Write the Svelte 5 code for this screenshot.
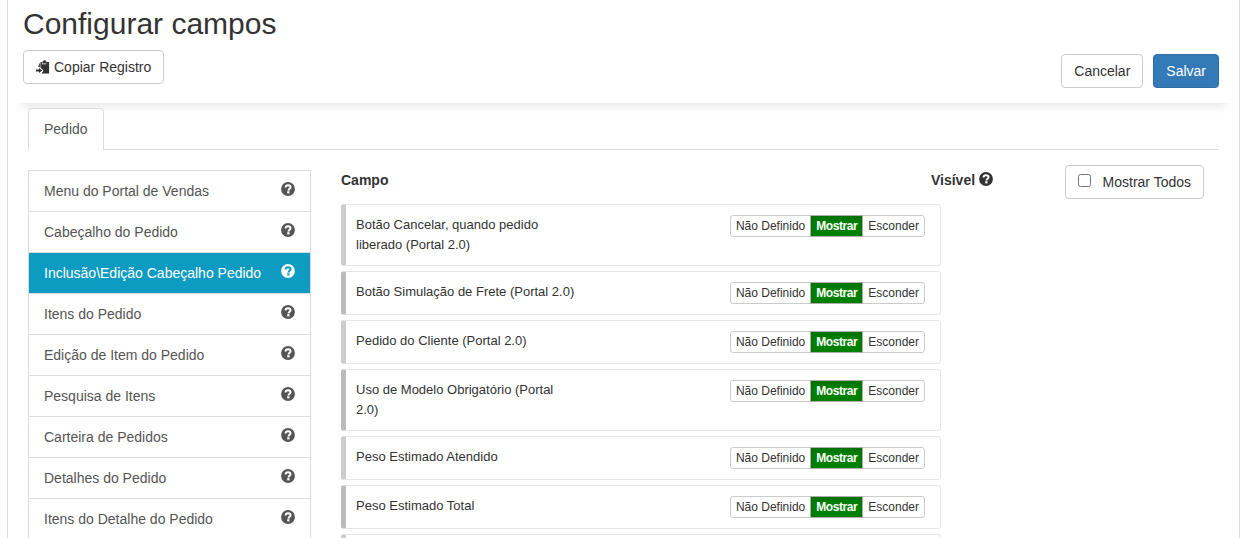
<script>
  const menu = [
    'Menu do Portal de Vendas',
    'Cabeçalho do Pedido',
    'Inclusão\\Edição Cabeçalho Pedido',
    'Itens do Pedido',
    'Edição de Item do Pedido',
    'Pesquisa de Itens',
    'Carteira de Pedidos',
    'Detalhes do Pedido',
    'Itens do Detalhe do Pedido'
  ];

  const fields = [
    'Botão Cancelar, quando pedido liberado (Portal 2.0)',
    'Botão Simulação de Frete (Portal 2.0)',
    'Pedido do Cliente (Portal 2.0)',
    'Uso de Modelo Obrigatório (Portal 2.0)',
    'Peso Estimado Atendido',
    'Peso Estimado Total'
  ];

  const options = ['Não Definido', 'Mostrar', 'Esconder'];

  let active = $state(2);
  let showAll = $state(false);
  let visible = $state(fields.map(() => 1));
</script>

{#snippet help()}
  <svg class="help" width="14" height="14" viewBox="0 0 14 14" aria-hidden="true">
    <circle cx="7" cy="7" r="6.9" fill="currentColor" />
    <path d="M4.6 5.6C4.6 4 5.5 3.3 7 3.3s2.5.8 2.5 2c0 1.5-2 1.5-2 3.2" fill="none" stroke="#fff" stroke-width="2" class="mark" />
    <rect x="6.2" y="9.2" width="2.3" height="2.2" fill="#fff" class="dot" />
  </svg>
{/snippet}

<div class="page">
  <header>
    <h2>Configurar campos</h2>
    <div class="toolbar">
      <button class="btn">
        <svg class="paste" width="14" height="14" viewBox="0 0 14 14" aria-hidden="true">
          <path d="M4.4 2h1.4v2.2h4.6V2h2.7v11.6H5.6l1.9-3.1-3.1-3z" fill="currentColor" />
          <path d="M6.3 3.6V1.5h.9L7.7.3h1.7l.5 1.2h.8v2.1z" fill="currentColor" />
          <path d="M3.9 2.6 2.2 6.4l1.7 1.2z" fill="currentColor" />
          <path d="M0 9.5h3V8l3.2 2.5L3 13v-1.5H0z" fill="currentColor" />
        </svg>
        Copiar Registro
      </button>
      <div class="actions">
        <button class="btn">Cancelar</button>
        <button class="btn primary">Salvar</button>
      </div>
    </div>
  </header>

  <nav class="tabs">
    <a class="tab" href="#pedido">Pedido</a>
  </nav>

  <div class="content">
    <ul class="menu">
      {#each menu as item, i}
        <li>
          <button class="item" class:active={active === i} onclick={() => (active = i)}>
            <span>{item}</span>
            {@render help()}
          </button>
        </li>
      {/each}
    </ul>

    <section class="fields">
      <div class="heading">
        <strong>Campo</strong>
        <strong class="visible">Visível {@render help()}</strong>
      </div>
      {#each fields as field, i}
        <div class="field">
          <span class="name">{field}</span>
          <div class="group">
            {#each options as option, n}
              <button class:selected={visible[i] === n} onclick={() => (visible[i] = n)}>{option}</button>
            {/each}
          </div>
        </div>
      {/each}
      <div class="field"></div>
    </section>

    <label class="btn show-all">
      <input type="checkbox" bind:checked={showAll} />
      Mostrar Todos
    </label>
  </div>
</div>

<style>
  :global(body) {
    overflow: hidden;
    background: #fff;
  }

  .page {
    box-sizing: border-box;
    width: 1233px;
    height: 538px;
    margin-left: 7px;
    overflow: hidden;
    border: solid #ddd;
    border-width: 0 1px;
    font: 14px/20px 'Liberation Sans', Arial, sans-serif;
    color: #333;
  }

  button {
    margin: 0;
    font: inherit;
    color: inherit;
    cursor: pointer;
  }

  header {
    box-sizing: border-box;
    height: 103px;
    margin: 0 7px;
    padding: 7px 13px 0 8px;
    box-shadow: 0 10px 9px -6px rgba(0, 0, 0, 0.09);
  }

  h2 {
    margin: 0;
    font-size: 30px;
    font-weight: 500;
    line-height: 33px;
  }

  .toolbar {
    display: flex;
    justify-content: space-between;
    margin-top: 10px;
  }

  .actions {
    display: flex;
    gap: 10px;
    margin-top: 4px;
  }

  .btn {
    box-sizing: border-box;
    display: inline-flex;
    align-items: center;
    height: 34px;
    padding: 6px 12px;
    border: 1px solid #ccc;
    border-radius: 4px;
    background: #fff;
    white-space: nowrap;
  }

  .primary {
    border-color: #2e6da4;
    background: #337ab7;
    color: #fff;
  }

  .paste {
    margin-right: 4px;
  }

  .tabs {
    display: flex;
    height: 41px;
    margin: 5px 20px 0;
    border-bottom: 1px solid #ddd;
  }

  .tab {
    box-sizing: border-box;
    height: 42px;
    padding: 10px 15px;
    border: 1px solid #ddd;
    border-bottom: 0;
    border-radius: 4px 4px 0 0;
    background: #fff;
    color: #555;
    text-decoration: none;
  }

  .content {
    display: flex;
    align-items: flex-start;
    padding: 0 35px 0 20px;
  }

  .menu {
    box-sizing: border-box;
    width: 283px;
    margin: 20px 30px 0 0;
    padding: 0;
    border: 1px solid #ddd;
    list-style: none;
  }

  .menu li {
    border-bottom: 1px solid #ddd;
  }

  .item {
    display: flex;
    justify-content: space-between;
    width: 100%;
    height: 40px;
    padding: 10px 15px;
    border: 0;
    background: #fff;
    color: #555;
    text-align: left;
  }

  .item .help {
    margin-top: 1px;
  }

  .item.active {
    background: #0e9bc1;
    color: #fff;
  }

  .active .mark {
    stroke: #0e9bc1;
  }

  .active .dot {
    fill: #0e9bc1;
  }

  .fields {
    width: 600px;
  }

  .heading {
    display: flex;
    height: 34px;
    margin-top: 20px;
  }

  .visible {
    margin-left: 542.5px;
    white-space: nowrap;
  }

  .visible .help {
    vertical-align: -1px;
  }

  .field {
    display: flex;
    justify-content: space-between;
    align-items: flex-start;
    margin-bottom: 5px;
    padding: 10px 15px 10px 10px;
    border: 1px solid #e7e7e7;
    border-left: 5px solid #ccc;
    border-radius: 3px;
  }

  .field:nth-child(odd) {
    border-left-color: #bbb;
  }

  .name {
    width: 221px;
    font-size: 13px;
  }

  .group {
    display: flex;
    font-size: 12px;
    line-height: 18px;
  }

  .group button {
    height: 22px;
    padding: 1px 5px;
    border: 1px solid #ccc;
    background: #fff;
  }

  .group button + button {
    margin-left: -1px;
  }

  .group button:first-child {
    border-radius: 3px 0 0 3px;
  }

  .group button:last-child {
    border-radius: 0 3px 3px 0;
  }

  .group .selected {
    z-index: 1;
    border-color: #adadad;
    background: green;
    color: #fff;
    font-weight: bold;
    letter-spacing: -0.43px;
    box-shadow: inset 0 3px 5px rgba(0, 0, 0, 0.125);
  }

  .show-all {
    margin: 15px 0 0 auto;
  }

  .show-all input {
    width: 13px;
    height: 13px;
    margin: -3px 11.5px 0 0;
  }
</style>
